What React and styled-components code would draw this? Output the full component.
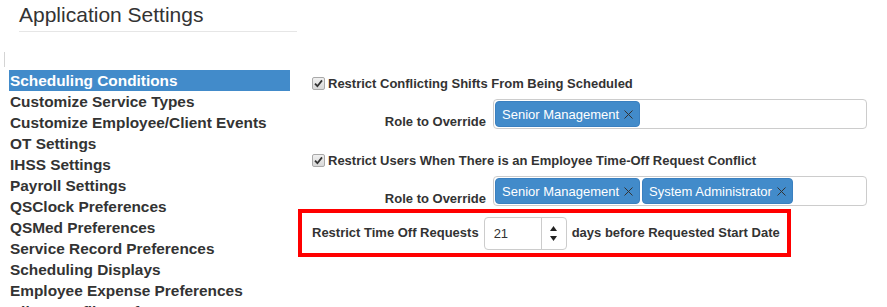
import React from 'react';
import styled, { createGlobalStyle } from 'styled-components';

const GlobalStyle = createGlobalStyle`
    html, body {
        margin: 0;
        padding: 0;
        height: 307px;
        overflow: hidden;
        background: #fff;
    }
    body {
        font-family: "Liberation Sans", Arial, sans-serif;
        color: #333;
    }
`;

const Page = styled.div`
    width: 887px;
    height: 307px;
    overflow: hidden;
`;

const Header = styled.div`
    width: 278px;
    margin-left: 19px;
    padding-top: 3px;
    padding-bottom: 4px;
    border-bottom: 1px solid #e6e6e6;
`;

const Title = styled.h1`
    margin: 0;
    font-size: 21px;
    line-height: 24px;
    font-weight: normal;
    color: #333;
`;

const Body = styled.div`
    display: flex;
    gap: 8px;
`;

const Sidebar = styled.div`
    width: 290px;
    padding: 20px 0 0 4px;
    box-sizing: border-box;
`;

const Grip = styled.div`
    width: 1px;
    height: 15px;
    background: #d4d4d4;
    margin-bottom: 3px;
`;

const Menu = styled.ul`
    list-style: none;
    margin: 0 0 0 5px;
    padding: 0;
`;

const MenuItem = styled.li`
    height: 21px;
    line-height: 21px;
    padding-left: 1px;
    font-size: 15.4px;
    font-weight: bold;
    white-space: nowrap;
    color: ${({ active }) => (active ? '#fff' : '#333')};
    background: ${({ active }) => (active ? '#428bca' : 'transparent')};
`;

const Main = styled.div`
    padding-top: 44px;
    width: 580px;
`;

const Section = styled.div`
    margin-bottom: ${({ last }) => (last ? '3px' : '24px')};
`;

const CheckRow = styled.div`
    display: flex;
    align-items: flex-start;
    padding-left: 14px;
    height: 16px;
`;

const CheckBox = styled.span`
    width: 11px;
    height: 11px;
    margin-top: 1px;
    margin-right: 3px;
    border: 1px solid #a9a9a9;
    border-radius: 2px;
    background: linear-gradient(#f0f0f0, #d8d8d8);
    display: flex;
    align-items: center;
    justify-content: center;
`;

const Label = styled.span`
    font-size: 13px;
    line-height: 16px;
    font-weight: bold;
    color: #333;
    white-space: nowrap;
`;

const RoleRow = styled.div`
    display: flex;
    align-items: flex-start;
    height: 30px;
    margin-top: 7px;
`;

const RoleLabel = styled(Label)`
    width: 188px;
    text-align: right;
    padding-top: 15px;
    margin-right: 7px;
`;

const TagBox = styled.div`
    width: 374px;
    height: 30px;
    box-sizing: border-box;
    border: 1px solid #ccc;
    border-radius: 4px;
    padding: 1px;
    display: flex;
    gap: 2px;
`;

const Tag = styled.span`
    height: 26px;
    box-sizing: border-box;
    display: flex;
    align-items: center;
    padding: 0 6px 0 6px;
    background: #428bca;
    border: 1px solid #3a80c0;
    border-radius: 4px;
    color: #fff;
    font-size: 13px;
    white-space: nowrap;
`;

const TagRemove = styled.span`
    display: flex;
    margin-left: 5px;
`;

const Highlight = styled.div`
    width: 493px;
    height: 48px;
    box-sizing: border-box;
    border: 4px solid #ff0000;
    display: flex;
    align-items: center;
    padding-left: 10px;
`;

const Spinner = styled.div`
    width: 83px;
    height: 33px;
    box-sizing: border-box;
    border: 1px solid #ccc;
    border-radius: 4px;
    display: flex;
    margin: 0 5px 0 5px;
`;

const SpinnerValue = styled.div`
    width: 56px;
    padding-left: 9px;
    box-sizing: border-box;
    font-size: 13px;
    line-height: 31px;
    color: #333;
`;

const SpinnerButtons = styled.div`
    flex: 1;
    border-left: 1px solid #ccc;
    display: flex;
    flex-direction: column;
    align-items: center;
    justify-content: center;
    gap: 5px;
`;

const menuItems = [
    'Scheduling Conditions',
    'Customize Service Types',
    'Customize Employee/Client Events',
    'OT Settings',
    'IHSS Settings',
    'Payroll Settings',
    'QSClock Preferences',
    'QSMed Preferences',
    'Service Record Preferences',
    'Scheduling Displays',
    'Employee Expense Preferences',
    'Client Profile Preferences',
];

const Check = () => (
    <CheckBox>
        <svg width="9" height="9" viewBox="0 0 9 9">
            <path d="M1 4.6 L3.4 7.2 L8 1.4" fill="none" stroke="#333" strokeWidth="1.8" />
        </svg>
    </CheckBox>
);

const Cross = () => (
    <TagRemove>
        <svg width="9" height="9" viewBox="0 0 9 9">
            <path d="M0.5 0.5 L8.5 8.5 M8.5 0.5 L0.5 8.5" stroke="#333" strokeWidth="1" />
        </svg>
    </TagRemove>
);

const Tags = ({ roles }) => (
    <TagBox>
        {roles.map((role) => (
            <Tag key={role}>
                {role}
                <Cross />
            </Tag>
        ))}
    </TagBox>
);

const Condition = ({ title, roles, last }) => (
    <Section last={last}>
        <CheckRow>
            <Check />
            <Label>{title}</Label>
        </CheckRow>
        <RoleRow>
            <RoleLabel>Role to Override</RoleLabel>
            <Tags roles={roles} />
        </RoleRow>
    </Section>
);

const App = () => {
    return (
        <Page>
            <GlobalStyle />
            <Header>
                <Title>Application Settings</Title>
            </Header>
            <Body>
                <Sidebar>
                    <Grip />
                    <Menu>
                        {menuItems.map((item, index) => (
                            <MenuItem key={item} active={index === 0}>
                                {item}
                            </MenuItem>
                        ))}
                    </Menu>
                </Sidebar>
                <Main>
                    <Condition
                        title="Restrict Conflicting Shifts From Being Scheduled"
                        roles={['Senior Management']}
                    />
                    <Condition
                        last
                        title="Restrict Users When There is an Employee Time-Off Request Conflict"
                        roles={['Senior Management', 'System Administrator']}
                    />
                    <Highlight>
                        <Label>Restrict Time Off Requests</Label>
                        <Spinner>
                            <SpinnerValue>21</SpinnerValue>
                            <SpinnerButtons>
                                <svg width="7" height="5" viewBox="0 0 7 5">
                                    <path d="M3.5 0 L7 5 L0 5 Z" fill="#222" />
                                </svg>
                                <svg width="7" height="5" viewBox="0 0 7 5">
                                    <path d="M0 0 L7 0 L3.5 5 Z" fill="#222" />
                                </svg>
                            </SpinnerButtons>
                        </Spinner>
                        <Label>days before Requested Start Date</Label>
                    </Highlight>
                </Main>
            </Body>
        </Page>
    );
};

export default App;
